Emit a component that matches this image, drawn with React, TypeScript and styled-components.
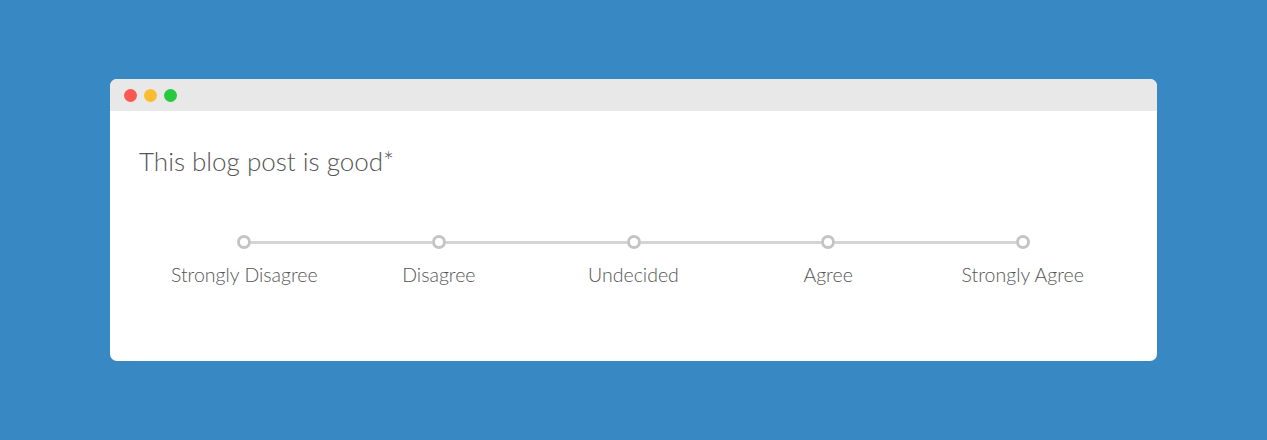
import React from "react";
import styled, { createGlobalStyle } from "styled-components";

const Global = createGlobalStyle`
  html, body { margin: 0; padding: 0; }
  body {
    background: #3888c4;
    height: 440px;
    font-family: Lato, "Open Sans", sans-serif;
    overflow: hidden;
  }
`;

const Page = styled.div`
  padding-top: 79px;
`;

const Window = styled.div`
  width: 1047px;
  margin: 0 auto;
  background: #ffffff;
  border-radius: 7px;
  overflow: hidden;
`;

const TitleBar = styled.div`
  height: 32px;
  background: #e8e8e8;
  display: flex;
  align-items: center;
  gap: 7px;
  padding-left: 14px;
`;

const Dot = styled.span<{ $color: string }>`
  width: 13px;
  height: 13px;
  border-radius: 50%;
  background: ${(p) => p.$color};
`;

const Body = styled.div`
  padding: 35px 29px 75px;
`;

const Question = styled.h1`
  margin: 0;
  font-family: Lato, sans-serif;
  font-weight: 300;
  font-size: 26px;
  line-height: 31px;
  color: #555555;
`;

const Scale = styled.div`
  margin: 58px 8px 0;
  display: grid;
  grid-template-columns: repeat(5, 1fr);
`;

const Option = styled.div`
  display: flex;
  flex-direction: column;
  align-items: center;
  gap: 15px;
`;

const Track = styled.div`
  width: 100%;
  display: flex;
  align-items: center;
`;

const Segment = styled.span<{ $hidden?: boolean }>`
  flex: 1;
  height: 3px;
  background: ${(p) => (p.$hidden ? "transparent" : "#d4d4d4")};
`;

const Node = styled.span`
  width: 14px;
  height: 14px;
  box-sizing: border-box;
  border: 3px solid #c4c4c4;
  border-radius: 50%;
  background: #fff;
  flex: none;
`;

const Label = styled.span`
  font-family: Lato, sans-serif;
  font-weight: 300;
  font-size: 19.5px;
  line-height: 22px;
  color: #555555;
  white-space: nowrap;
`;

const options = ["Strongly Disagree", "Disagree", "Undecided", "Agree", "Strongly Agree"];

export default function App() {
  return (
    <Page>
      <Global />
      <Window>
        <TitleBar>
          <Dot $color="#fc5753" />
          <Dot $color="#fdbc2f" />
          <Dot $color="#28c840" />
        </TitleBar>
        <Body>
          <Question>This blog post is good*</Question>
          <Scale>
            {options.map((o, i) => (
              <Option key={o}>
                <Track>
                  <Segment $hidden={i === 0} />
                  <Node />
                  <Segment $hidden={i === options.length - 1} />
                </Track>
                <Label>{o}</Label>
              </Option>
            ))}
          </Scale>
        </Body>
      </Window>
    </Page>
  );
}
